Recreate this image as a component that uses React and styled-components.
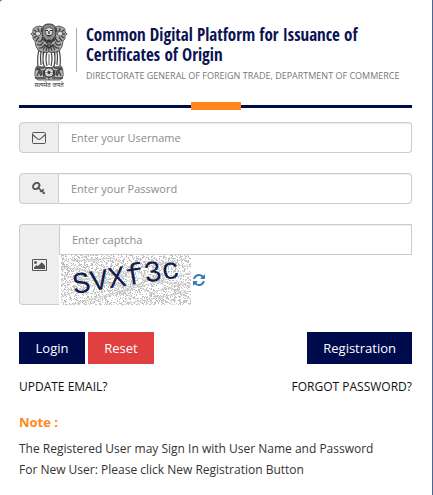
import React from "react";
import styled, { createGlobalStyle } from "styled-components";

const GlobalStyle = createGlobalStyle`
    * {
        box-sizing: border-box;
    }

    body {
        margin: 0;
        background: #4d6491;
        font-family: "Open Sans", "Noto Sans", sans-serif;
        font-size: 12px;
        color: #333;
    }
`;

const Card = styled('main')`
    min-height: 100vh;
    margin-right: 1px;
    padding: 23px 20px 14px 19px;
    border-top-left-radius: 3px;
    background: #fff;
`;

const Header = styled('header')`
    display: flex;
    gap: 8px;
    padding-left: 11px;
`;

const Titles = styled('div')`
    flex: 1;
    min-width: 0;
    margin-top: 2px;
    padding-left: 1px;
    white-space: nowrap;
`;

const HeaderLine = styled('div')`
    flex: none;
    width: 1px;
    height: 44px;
    margin-top: 5px;
    background: #aaa;
`;

const Title = styled('h1')`
    margin: 0;
    font-family: "Open Sans Condensed", "Liberation Sans Narrow", "Roboto", sans-serif;
    font-size: 17px;
    font-weight: 700;
    line-height: 20px;
    color: #0b1354;
`;

const Subtitle = styled('p')`
    margin: 3px 0 0;
    font-size: 9px;
    line-height: 16px;
    color: #777;
`;

const Rule = styled('div')`
    display: flex;
    align-items: center;
    justify-content: center;
    height: 8px;
    margin: 13px 0 12px;
    background: linear-gradient(#000b4d, #000b4d) center / 100% 3px no-repeat;
`;

const RuleAccent = styled('span')`
    width: 50px;
    height: 8px;
    background: #ff871c;
`;

const Form = styled('form')`
    display: flex;
    flex-direction: column;
    gap: 20px;
`;

const Group = styled('div')`
    display: flex;
`;

const Addon = styled('label')`
    display: flex;
    flex: none;
    align-items: center;
    justify-content: center;
    width: 40px;
    border: 1px solid #ccc;
    border-right: ${({ $open }) => ($open ? "0" : "1px solid #ccc")};
    border-radius: 4px 0 0 4px;
    background: #eee;
    color: #555;
`;

const Input = styled('input')`
    display: block;
    flex: 1;
    width: 100%;
    min-width: 0;
    height: 31px;
    padding: 0 12px;
    border: 1px solid #ccc;
    border-left-width: ${({ $square }) => ($square ? "1px" : "0")};
    border-radius: ${({ $square }) => ($square ? "0" : "0 4px 4px 0")};
    background: #fff;
    box-shadow: inset 0 1px 1px rgba(0, 0, 0, 0.07);
    font-family: inherit;
    font-size: 11px;
    color: #555;

    &::placeholder {
        color: #8c8c8c;
        opacity: 1;
    }
`;

const CaptchaColumn = styled('div')`
    flex: 1;
    min-width: 0;
`;

const CaptchaRow = styled('div')`
    display: flex;
    align-items: center;
    gap: 2px;
    padding-left: 2px;
`;

const RefreshButton = styled('button')`
    display: flex;
    padding: 0;
    border: 0;
    background: none;
    color: #337ab7;
    cursor: pointer;
`;

const Actions = styled('div')`
    display: flex;
    gap: 3px;
    margin-top: 7px;
`;

const Button = styled('button')`
    height: 32px;
    min-width: 66px;
    margin-left: ${({ $end }) => ($end ? "auto" : "0")};
    padding: 0 16px;
    border: 0;
    background: ${({ $color }) => $color};
    font-family: inherit;
    font-size: 13px;
    color: #fff;
    cursor: pointer;
`;

const Links = styled('nav')`
    display: flex;
    justify-content: space-between;
    margin-top: 14px;
    line-height: 18px;
`;

const Link = styled('a')`
    color: #111;
    text-decoration: none;
`;

const NoteTitle = styled('h2')`
    margin: 16px 0 6px;
    font-size: 13px;
    font-weight: 700;
    line-height: 20px;
    color: #ff871c;
`;

const NoteText = styled('p')`
    margin: 0;
    line-height: 21px;
`;

const EnvelopeIcon = () => (
    <svg width="14" height="12" viewBox="0 0 14 12" fill="none" stroke="currentColor" aria-hidden="true">
        <rect x="0.5" y="0.5" width="13" height="11" rx="1" />
        <path d="M0.8 2.6C2.6 4.5 4.4 5.7 5.6 6.8Q7 8 8.4 6.8C9.6 5.7 11.4 4.5 13.2 2.6" strokeWidth="1.1" />
    </svg>
);

const KeyIcon = () => (
    <svg width="14" height="13" viewBox="0 0 14 13" fill="none" stroke="currentColor" aria-hidden="true">
        <ellipse cx="4.2" cy="4" rx="3.5" ry="2.7" transform="rotate(-42 4.2 4)" strokeWidth="1.9" />
        <path d="M6 5.6L12.8 11.6M9.9 9.1L11.7 7.3M8.2 9.9L9.5 8.6M11 11.8L12.2 10.4" strokeWidth="1.6" />
    </svg>
);

const PictureIcon = () => (
    <svg width="15" height="14" viewBox="-64 0 1920 1792" fill="currentColor" aria-hidden="true">
        <path d="M576 576q0 80-56 136t-136 56-136-56-56-136 56-136 136-56 136 56 56 136zm1024 384v448h-1408v-192l320-320 160 160 512-512zm96-704h-1600q-13 0-22.5 9.5t-9.5 22.5v1216q0 13 9.5 22.5t22.5 9.5h1600q13 0 22.5-9.5t9.5-22.5v-1216q0-13-9.5-22.5t-22.5-9.5zm160 32v1216q0 66-47 113t-113 47h-1600q-66 0-113-47t-47-113v-1216q0-66 47-113t113-47h1600q66 0 113 47t47 113z" />
    </svg>
);

const RefreshIcon = () => (
    <svg width="12" height="14" viewBox="0 0 1536 1792" fill="currentColor" aria-hidden="true">
        <path d="M1511 1056q0 5-1 7-64 268-268 434.5t-478 166.5q-146 0-282.5-55t-243.5-157l-129 129q-19 19-45 19t-45-19-19-45v-448q0-26 19-45t45-19h448q26 0 45 19t19 45-19 45l-137 137q71 66 161 102t187 36q134 0 250-65t186-179q11-17 53-117 8-23 30-23h192q13 0 22.5 9.5t9.5 22.5zm25-800v448q0 26-19 45t-45 19h-448q-26 0-45-19t-19-45 19-45l138-138q-148-137-349-137-134 0-250 65t-186 179q-11 17-53 117-8 23-30 23h-199q-13 0-22.5-9.5t-9.5-22.5v-7q65-268 270-434.5t480-166.5q146 0 284 55.5t245 156.5l130-129q19-19 45-19t45 19 19 45z" />
    </svg>
);

const EmblemSvg = styled('svg')`
    flex: none;
    display: block;
`;

// left half of the capital, mirrored for the right half
const EmblemHalf = () => (
    <g stroke="#444" strokeWidth="0.8" fill="none">
        <path d="M13 4Q9 2 6 4Q2 5 3 9L0.8 11L3 13Q2 16 5 18Q5 23 8 27L11 29Q15 30 19 29V8Z" fill="#aaa" />
        <path d="M4 7L7 9M3 11L7 11M4 15L8 12M6 18L9 14M8 5L9 9M12 5L11 9" strokeWidth="1.3" />
        <path d="M5 10Q7 7 10 9Q12 11 9 13Q6 14 5 10Z" fill="#ddd" />
        <path d="M8 18Q11 20 12 16M7 21Q11 24 13 19M9 25Q12 26 15 21M12 14Q13 18 16 18M13 27L16 22M16 28L18 21" strokeWidth="1.4" />
        <path d="M9 27Q7 34 8 43M11 28Q10 34 11 42M14 28Q12 36 14 43M17 29Q15 35 17 43" strokeWidth="1.2" />
        <path d="M12.5 30V41M18.5 31V42" stroke="#999" />
        <path d="M7 43L19 45V57H8Q4 55 5 49Q5 45 7 43Z" fill="#bbb" />
        <path d="M6 45H13L15 43M5 55H16M6 47Q9 45 11 48L12 52M7 53L9 48L11 53M13 47L14 54" strokeWidth="1.4" />
    </g>
);

const Emblem = () => (
    <EmblemSvg width="38" height="66" viewBox="0 0 38 66" role="img" aria-label="State Emblem of India">
        <EmblemHalf />
        <g transform="translate(38 0) scale(-1 1)">
            <EmblemHalf />
        </g>
        <path d="M13 5Q13 1 19 1Q25 1 25 5L26 11Q25 17 19 18Q13 17 12 11Z" fill="#888" stroke="#333" />
        <path d="M15 6Q19 3 23 6L22 11L19 14L16 11Z" fill="#ddd" stroke="#444" strokeWidth="0.7" />
        <path d="M15.5 7.5H18M20 7.5H22.5M19 8V11M17 12.5H21" stroke="#222" strokeWidth="1.2" />
        <path d="M14 15L17 20L19 17L21 20L24 15M15 22L19 25L23 22" fill="none" stroke="#333" strokeWidth="1.4" />
        <circle cx="19" cy="49.5" r="4.7" fill="#eee" stroke="#333" strokeWidth="1.4" />
        <path d="M19 45.5V53.5M15 49.5H23M16.2 46.7L21.8 52.3M21.8 46.7L16.2 52.3" stroke="#666" strokeWidth="0.6" />
        <circle cx="19" cy="49.5" r="1.4" fill="#333" />
        <text x="19" y="64" textAnchor="middle" fontFamily="Noto Sans Devanagari, Noto Sans, sans-serif" fontSize="6" fill="#333">
            सत्यमेव जयते
        </text>
    </EmblemSvg>
);

const makeSpeckles = (width, height) => {
    let seed = 7919;
    let path = "";
    for (let y = 0; y < height; y++) {
        for (let x = 0; x < width; x++) {
            seed = (seed * 1103515245 + 12345) % 2147483648;
            if (seed / 2147483648 < 0.32) {
                path += `M${x} ${y}h1v1h-1z`;
            }
        }
    }
    return path;
};

const speckles = makeSpeckles(130, 50);

const Captcha = () => (
    <svg width="130" height="50" viewBox="0 0 130 50" overflow="visible" role="img" aria-label="Captcha">
        <rect width="130" height="50" fill="#fff" />
        <path d={speckles} fill="#c0c0c0" />
        <g stroke="#ccc" strokeWidth="1" fill="none">
            <path d="M0 12L130 31M0 29L124 4M8 50L130 18M20 0L112 50M0 42L92 8M45 0L130 44M0 3L78 46M60 50L130 36" />
            <path d="M0 20L70 32M32 47L96 22M84 6L130 12M10 6L54 3M88 38L126 28" />
        </g>
        <text x="13" y="39" transform="rotate(-9 13 39)" fontFamily="Liberation Mono, monospace" fontSize="30" fill="#111d4a">
            SVXf3c
        </text>
    </svg>
);

const App = () => (
    <>
        <GlobalStyle />
        <Card>
            <Header>
                <Emblem />
                <HeaderLine />
                <Titles>
                    <Title>
                        Common Digital Platform for Issuance of
                        <br />
                        Certificates of Origin
                    </Title>
                    <Subtitle>DIRECTORATE GENERAL OF FOREIGN TRADE, DEPARTMENT OF COMMERCE</Subtitle>
                </Titles>
            </Header>
            <Rule>
                <RuleAccent />
            </Rule>
            <Form onSubmit={(e) => e.preventDefault()}>
                <Group>
                    <Addon htmlFor="username" aria-label="Username">
                        <EnvelopeIcon />
                    </Addon>
                    <Input id="username" type="text" placeholder="Enter your Username" />
                </Group>
                <Group>
                    <Addon htmlFor="password" aria-label="Password">
                        <KeyIcon />
                    </Addon>
                    <Input id="password" type="password" placeholder="Enter your Password" />
                </Group>
                <Group>
                    <Addon $open htmlFor="captcha" aria-label="Captcha">
                        <PictureIcon />
                    </Addon>
                    <CaptchaColumn>
                        <Input $square id="captcha" type="text" placeholder="Enter captcha" />
                        <CaptchaRow>
                            <Captcha />
                            <RefreshButton type="button" aria-label="Refresh captcha">
                                <RefreshIcon />
                            </RefreshButton>
                        </CaptchaRow>
                    </CaptchaColumn>
                </Group>
                <Actions>
                    <Button type="submit" $color="#000b4d">Login</Button>
                    <Button type="reset" $color="#e04040">Reset</Button>
                    <Button type="button" $color="#000b4d" $end>Registration</Button>
                </Actions>
            </Form>
            <Links>
                <Link href="#update-email">UPDATE EMAIL?</Link>
                <Link href="#forgot-password">FORGOT PASSWORD?</Link>
            </Links>
            <NoteTitle>Note :</NoteTitle>
            <NoteText>The Registered User may Sign In with User Name and Password</NoteText>
            <NoteText>For New User: Please click New Registration Button</NoteText>
        </Card>
    </>
);

export default App;
